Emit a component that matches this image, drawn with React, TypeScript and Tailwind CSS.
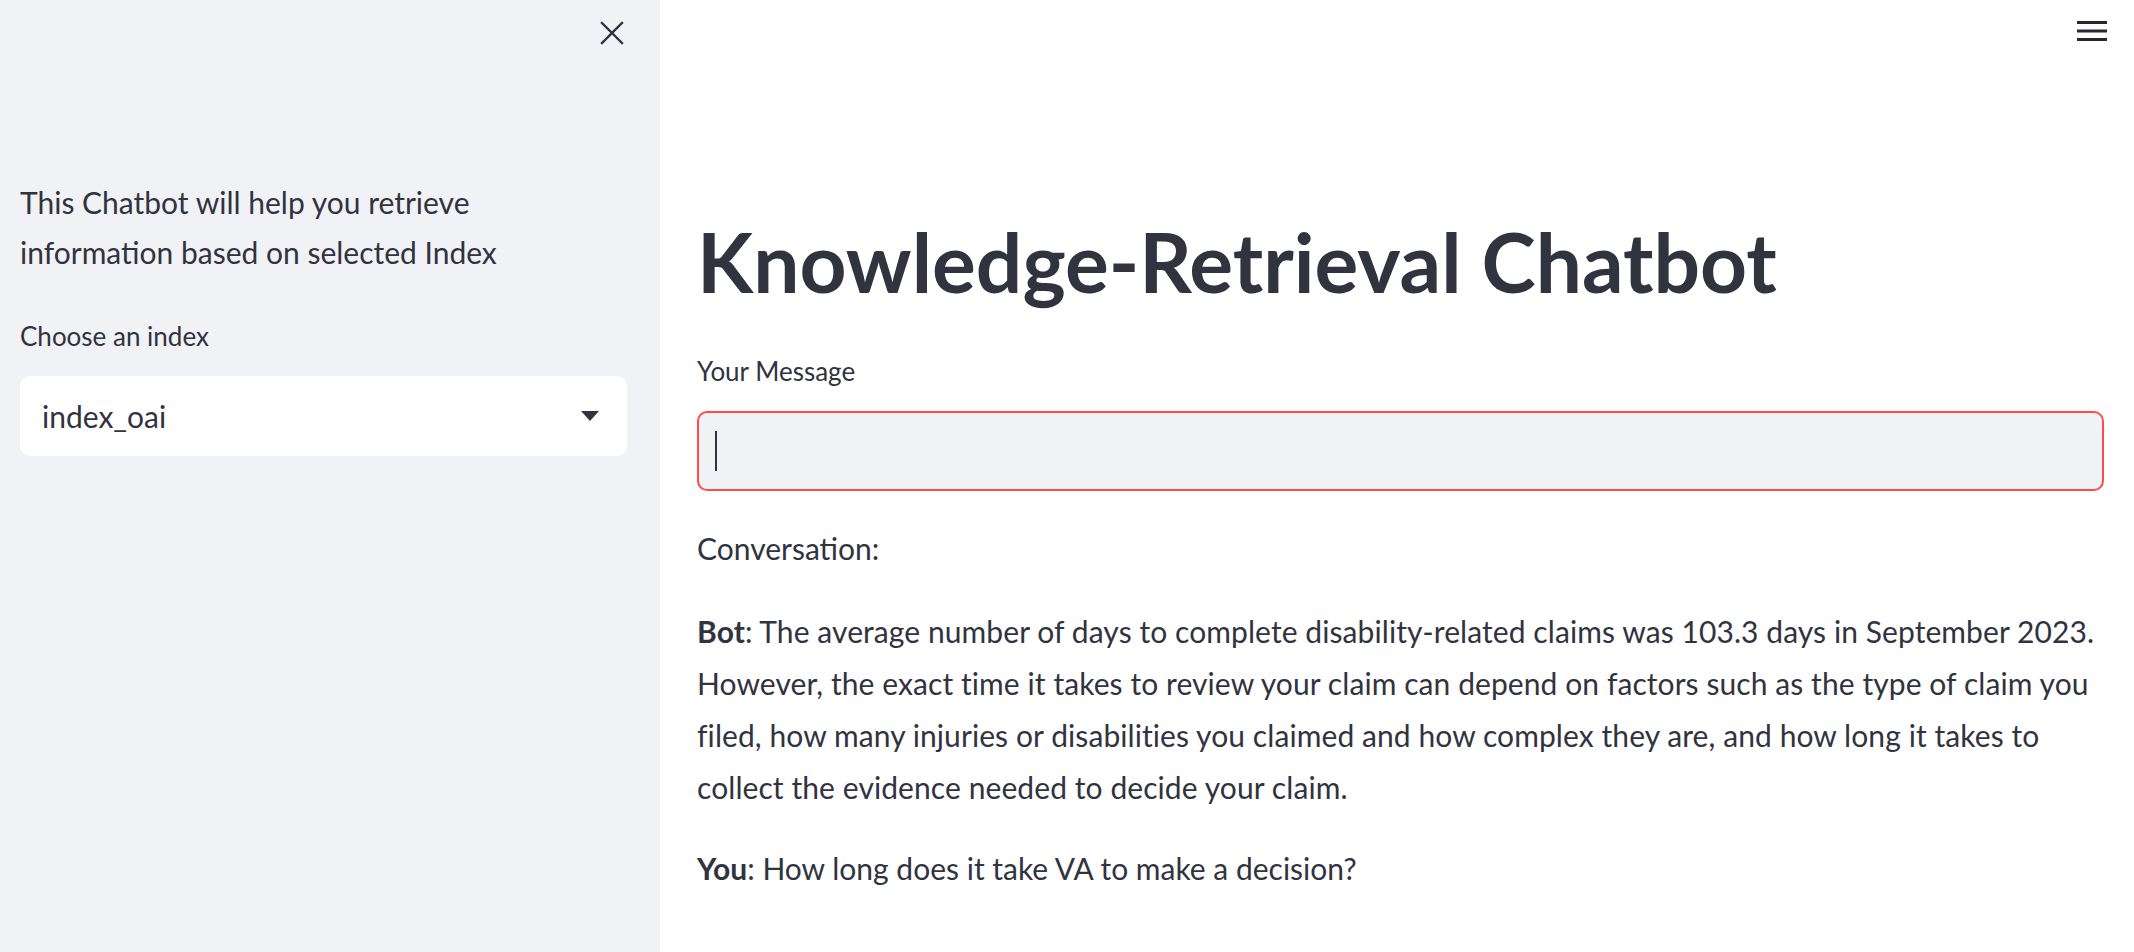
export default function App() {
  return (
    <div className="flex h-[952px] w-full overflow-hidden bg-white text-[#31333F] font-['Lato','Noto_Sans',sans-serif]">
      {/* sidebar */}
      <aside className="flex w-[660px] shrink-0 flex-col bg-[#F0F2F6] pl-[20px] pr-[33px]">
        <div className="flex h-[66px] items-center justify-end pr-[3px]">
          <svg width="24" height="24" viewBox="0 0 24 24" fill="none" stroke="#31333F" strokeWidth="2.4" strokeLinecap="square">
            <path d="M2 2 L22 22 M22 2 L2 22" />
          </svg>
        </div>
        <p className="mt-[111px] text-[30px] leading-[50px]">
          This Chatbot will help you retrieve
          <br />
          information based on selected Index
        </p>
        <label className="mt-[41px] text-[26px] leading-[36px]">Choose an index</label>
        <div className="mt-[22px] flex h-[80px] items-center justify-between rounded-[10px] bg-white pl-[22px] pr-[28px]">
          <span className="text-[30px]">index_oai</span>
          <svg width="18" height="10" viewBox="0 0 18 10">
            <path d="M0 0 H18 L9 10 Z" fill="#31333F" />
          </svg>
        </div>
      </aside>

      {/* main */}
      <main className="flex flex-1 flex-col pl-[37px] pr-[30px]">
        <div className="flex h-[64px] items-center justify-end">
          <svg width="30" height="22" viewBox="0 0 30 22" className="mr-[-3px]">
            <rect x="0" y="0" width="30" height="3" fill="#262730" />
            <rect x="0" y="8.5" width="30" height="3" fill="#262730" />
            <rect x="0" y="17" width="30" height="3" fill="#262730" />
          </svg>
        </div>
        <h1 className="mt-[149px] text-[82px] font-bold leading-[96px]">
          Knowledge-Retrieval Chatbot
        </h1>
        <label className="mt-[44px] text-[26px] leading-[36px]">Your Message</label>
        <div className="mt-[22px] flex h-[80px] items-center rounded-[10px] border-2 border-[#FF4B4B] bg-[#F0F2F6] pl-[16px]">
          <div className="h-[40px] w-[2px] bg-[#31333F]" />
        </div>
        <p className="mt-[31px] text-[30px] leading-[52px]">Conversation:</p>
        <p className="mt-[31px] text-[30px] leading-[52px] tracking-[0.08px]">
          <strong className="font-bold">Bot</strong>: The average number of days to complete disability-related claims was 103.3 days in September 2023.
          <br />
          However, the exact time it takes to review your claim can depend on factors such as the type of claim you
          <br />
          filed, how many injuries or disabilities you claimed and how complex they are, and how long it takes to
          <br />
          collect the evidence needed to decide your claim.
        </p>
        <p className="mt-[29px] text-[30px] leading-[52px]">
          <strong className="font-bold">You</strong>: How long does it take VA to make a decision?
        </p>
      </main>
    </div>
  );
}
